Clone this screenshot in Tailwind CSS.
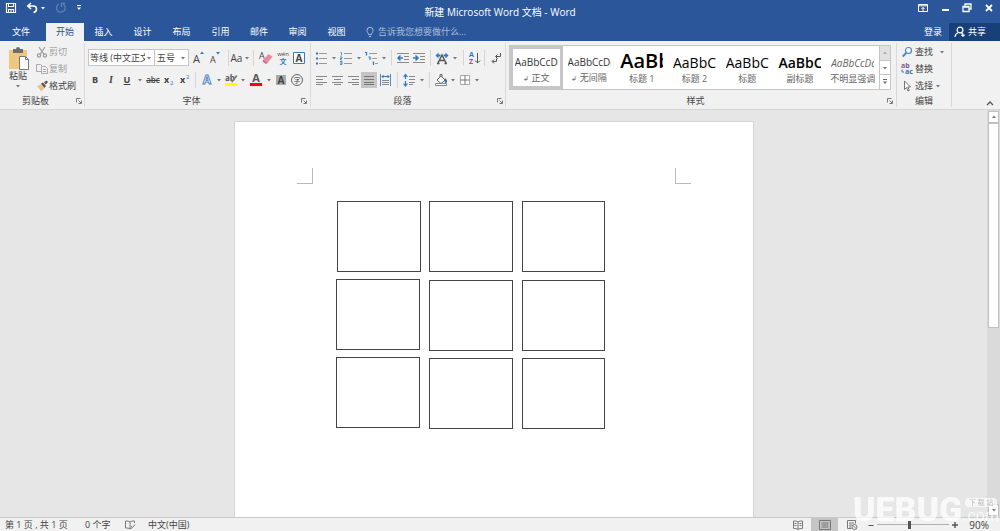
<!DOCTYPE html>
<html lang="zh-CN">
<head>
  <meta charset="UTF-8" />
  <meta name="viewport" content="width=device-width, initial-scale=1.0"/>
  <title>新建 Microsoft Word 文档 - Word</title>
  <script src="https://cdn.jsdelivr.net/npm/@tailwindcss/browser@4"></script>
</head>
<body class="h-screen flex flex-col overflow-hidden bg-[#e6e6e6] text-[#444] text-[9px] leading-3 font-['Open_Sans','Noto_Sans_CJK_SC',sans-serif]">

  <!-- Shared icons -->
  <svg class="hidden">
    <symbol id="caret" viewBox="0 0 8 8"><path d="M2 3h4L4 5.500z" fill="#777"/></symbol>
    <symbol id="caret-light" viewBox="0 0 8 8"><path d="M2 3h4L4 5.500z" fill="#fff"/></symbol>
    <symbol id="launcher" viewBox="0 0 8 8"><path d="M1.500 5.500v-4h4M3.500 3.500 6 6M6.500 3.500v3h-3" fill="none" stroke="#777"/></symbol>
  </svg>

  <!-- Title bar -->
  <header class="bg-[#2b579a] text-white shrink-0">
    <div class="grid grid-cols-[1fr_auto_1fr] h-[23px]">
      <div class="flex items-center h-4 pl-[5px]">
        <button aria-label="保存" class="w-3 h-3"><svg viewBox="0 0 12 12"><path d="M1.500 1.500h9v9h-9z" fill="none" stroke="#fff" stroke-width="1.200"/><path d="M3 1h6v4H3zM3 7h6v4H3z" fill="#fff"/><path d="M4 2h4v2H4zM4 8h1.500v2H4zM6.500 8H8v2H6.500z" fill="#2b579a"/></svg></button>
        <button aria-label="撤消" class="w-3 h-3 ml-[9px]"><svg viewBox="0 0 12 12" fill="none" stroke="#fff" stroke-width="1.600"><path d="M5 1 1.800 4 5 7M2 4h5.500c4 0 4 6 0 6.500"/></svg></button>
        <button aria-label="撤消选项" class="w-2 h-2 ml-px"><svg class="w-2 h-2"><use href="#caret-light"/></svg></button>
        <button aria-label="重做" class="w-3 h-3 ml-2"><svg viewBox="0 0 12 12" fill="none" stroke="#5c7fb5" stroke-width="1.300"><path d="M4 2a4.300 4.300 0 1 0 4.500.5M6.500 5V1.500H10"/></svg></button>
        <button aria-label="自定义快速访问工具栏" class="w-2 h-2 ml-2"><svg viewBox="0 0 8 8" fill="#fff"><path d="M2 1h4v1H2zM2 3.500h4L4 6z"/></svg></button>
      </div>
      <h1 class="text-[10px] pt-[6px]">新建 Microsoft Word 文档 - Word</h1>
      <div class="flex items-center justify-end h-4 pr-[5px] gap-[10px]">
        <button aria-label="功能区显示选项" class="w-3 h-3"><svg viewBox="0 0 12 12" fill="none" stroke="#fff"><path d="M1.500 2.500h9v7h-9zM2 3.800h8M6 9V5.500M4.500 7 6 5.500 7.500 7"/></svg></button>
        <button aria-label="最小化" class="w-3 h-3"><svg viewBox="0 0 12 12" fill="#fff"><path d="M3 7h7v2H3z"/></svg></button>
        <button aria-label="还原" class="w-3 h-3"><svg viewBox="0 0 12 12" fill="none" stroke="#fff" stroke-width="1.300"><path d="M4 4V2h6v5H8M2 4.500h6v5H2zM2 5h6"/></svg></button>
        <button aria-label="关闭" class="w-3 h-3"><svg viewBox="0 0 12 12" fill="none" stroke="#fff" stroke-width="1.800"><path d="m3 3 6 6M9 3 3 9"/></svg></button>
      </div>
    </div>

    <nav class="flex h-[18px] items-stretch">
      <button class="w-[42px] mr-[4px]">文件</button>
      <button class="w-[38px] bg-[#f1f1f1] text-[#2b579a]">开始</button>
      <button class="w-[39px]">插入</button>
      <button class="w-[39px]">设计</button>
      <button class="w-[39px]">布局</button>
      <button class="w-[39px]">引用</button>
      <button class="w-[38px]">邮件</button>
      <button class="w-[39px]">审阅</button>
      <button class="w-[39px]">视图</button>
      <label class="flex items-center ml-2 flex-1">
        <svg class="w-3 h-3 mr-[2px]" viewBox="0 0 12 12" fill="none" stroke="#a9bcdb"><path d="M4.500 8.500C4.500 7 3 6.500 3 4.300a3 3 0 0 1 6 0C9 6.500 7.500 7 7.500 8.500zM4.800 10.500h2.400"/></svg>
        <input type="text" aria-label="告诉我您想要做什么" placeholder="告诉我您想要做什么..." class="w-28 outline-none placeholder:text-[#a9bcdb]"/>
      </label>
      <button class="px-[7px]">登录</button>
      <button class="w-[51px] flex items-center pl-[5px] gap-[2px] bg-[#173f78]">
        <svg class="w-3 h-3" viewBox="0 0 12 12" fill="none" stroke="#fff" stroke-width="1.200"><circle cx="6" cy="4" r="2.900"/><path d="M1 11c.3-2.500 1.500-3.700 3-4.200M7.500 7l1 1M9 7.500V11M7.200 9.300h3.600"/></svg>
        共享
      </button>
    </nav>
  </header>

  <!-- Ribbon -->
  <div class="flex shrink-0 h-[69px] bg-[#f1f1f1] border-b border-[#d5d5d5]">

    <!-- Clipboard -->
    <section class="w-[84px] flex flex-col py-[2px]">
      <div class="flex h-[53px]">
        <button class="w-[36px] flex flex-col items-center pt-[3px]">
          <svg class="w-6 h-6" viewBox="0 0 24 24"><path d="M3 4h18v19H3z" fill="#edc87e"/><path d="M7 3h3a2 2 0 0 1 4 0h3v4H7z" fill="#6d6d6d"/><path d="M13.500 10.500h6l3 3v10h-9z" fill="#fff" stroke="#777"/><path d="M19.500 10.500v3h3" fill="none" stroke="#777"/></svg>
          <span>粘贴</span>
          <svg class="w-2 h-2"><use href="#caret"/></svg>
        </button>
        <div class="flex flex-col items-start gap-[5px] pt-[3px]">
          <button class="flex items-center gap-px text-[#a0a0a0]"><svg class="w-3 h-3" viewBox="0 0 12 12" fill="none" stroke="#9a9a9a" stroke-width="1.200"><path d="m3 1 5 7.500M9 1 4 8.500"/><circle cx="3" cy="9.500" r="1.600"/><circle cx="9" cy="9.500" r="1.600"/></svg>剪切</button>
          <button class="flex items-center gap-px text-[#a0a0a0]"><svg class="w-3 h-3" viewBox="0 0 12 12" fill="#f1f1f1" stroke="#b0a8b0"><path d="M.5 1.500h4l2 2v5h-6z"/><path d="M5.500 3.500h4l2 2v5h-6zM7 6.500h3M7 8.500h3"/></svg>复制</button>
          <button class="flex items-center gap-px"><svg class="w-3 h-3" viewBox="0 0 12 12"><path d="M1 6.500 5 4l3.500 4L5 11.500C4 9.500 3 8 1 6.500z" fill="#edc087"/><path d="m5 3.500 2-1 3 3.500-1.500 2zM8 2.500 10.500.5 12 2 9.800 4.500z" fill="#555"/></svg>格式刷</button>
        </div>
      </div>
      <footer class="flex items-center"><span class="flex-1 pl-[22px]">剪贴板</span><button aria-label="剪贴板选项" class="mr-px"><svg class="w-2 h-2"><use href="#launcher"/></svg></button></footer>
    </section>
    <div class="w-px my-[2px] bg-[#dadada]"></div>

    <!-- Font -->
    <section class="w-[225px] flex flex-col py-[2px] pl-[2px]">
      <div class="flex flex-col gap-[6px] h-[53px] pt-[6px]">
        <div class="flex items-center h-[17px] pl-px">
          <div class="relative w-[67px] h-[17px] bg-white border border-[#c6c6c6]">
            <select aria-label="字体" class="appearance-none w-full h-[15px] pl-px pr-[9px] overflow-hidden"><option>等线 (中文正文)</option></select>
            <svg class="absolute right-px top-1 w-2 h-2 pointer-events-none"><use href="#caret"/></svg>
          </div>
          <div class="relative w-[34px] h-[17px] bg-white border border-l-0 border-[#c6c6c6]">
            <select aria-label="字号" class="appearance-none w-full h-[15px] pl-[2px]"><option>五号</option></select>
            <svg class="absolute right-px top-1 w-2 h-2 pointer-events-none"><use href="#caret"/></svg>
          </div>
          <button aria-label="增大字号" class="w-4 h-4 ml-px"><svg viewBox="0 0 16 16"><text x="3" y="13" font-size="11" fill="#444">A</text><path d="m10 4 2-2.500L14 4z" fill="#2f78c0"/></svg></button>
          <button aria-label="减小字号" class="w-4 h-4 ml-px"><svg viewBox="0 0 16 16"><text x="3" y="13" font-size="9" fill="#444">A</text><path d="M9 2h4l-2 2.500z" fill="#2f78c0"/></svg></button>
          <span class="w-px h-4 ml-[5px] bg-[#d5d5d5]"></span>
          <button aria-label="更改大小写" class="flex items-center ml-px text-[10px]"><span class="w-[13px]">Aa</span><svg class="w-2 h-2"><use href="#caret"/></svg></button>
          <span class="w-px h-4 ml-[2px] bg-[#d5d5d5]"></span>
          <button aria-label="清除格式" class="w-4 h-4 ml-[4px]"><svg viewBox="0 0 16 16"><text x="1" y="9" font-size="9" fill="#444">A</text><path d="m5.500 9.500 5-5.500 4 2.500-5 6.500z" fill="#ea8a9c"/><path d="m5.500 9.500 4 3.500-1.500 1-3.500-2.500z" fill="#d5667c"/></svg></button>
          <button aria-label="拼音指南" class="w-4 h-4 ml-px"><svg viewBox="0 0 16 16"><text x="8" y="6" font-size="6" text-anchor="middle" fill="#444">wén</text><text x="8" y="14" font-size="7" font-weight="bold" text-anchor="middle" fill="#2f78c0">文</text></svg></button>
          <button aria-label="字符边框" class="w-4 h-4"><svg viewBox="0 0 16 16"><path d="M2.500 2.500h11v11h-11z" fill="#fff" stroke="#4479ae"/><text x="8" y="12" font-size="10" font-weight="bold" text-anchor="middle" fill="#444">A</text></svg></button>
        </div>
        <div class="flex items-center h-4">
          <button class="w-4 font-bold">B</button>
          <button class="w-4 font-bold italic font-['Liberation_Serif',serif] text-[10px]">I</button>
          <button class="w-4 font-bold underline">U</button>
          <button aria-label="下划线选项" class="mr-px"><svg class="w-2 h-2 ml-px"><use href="#caret"/></svg></button>
          <button class="w-4 text-[8px] font-semibold line-through">abc</button>
          <button aria-label="下标" class="w-4 h-4"><svg viewBox="0 0 16 16"><text x="3" y="11" font-size="9" font-weight="bold" fill="#444">x</text><text x="9" y="13" font-size="6" fill="#2f78c0">2</text></svg></button>
          <button aria-label="上标" class="w-4 h-4"><svg viewBox="0 0 16 16"><text x="3" y="11" font-size="9" font-weight="bold" fill="#444">x</text><text x="9" y="7" font-size="6" fill="#2f78c0">2</text></svg></button>
          <span class="w-px h-4 ml-[2px] bg-[#d5d5d5]"></span>
          <button aria-label="文本效果" class="w-4 h-4 ml-[3px]"><svg viewBox="0 0 16 16"><text x="8" y="12" font-size="12" font-weight="bold" text-anchor="middle" fill="#fff" stroke="#4c83c3" stroke-width=".9">A</text></svg></button>
          <button aria-label="文本效果选项"><svg class="w-2 h-2"><use href="#caret"/></svg></button>
          <button aria-label="突出显示" class="w-4 h-4"><svg viewBox="0 0 16 16"><text x="2" y="9" font-size="8" font-weight="bold" fill="#555">ab</text><path d="m8 10 5-7 1.500 1-5 6.500z" fill="#777"/><path d="M2 11h12v3H2z" fill="#ff0"/></svg></button>
          <button aria-label="突出显示颜色"><svg class="w-2 h-2"><use href="#caret"/></svg></button>
          <button aria-label="字体颜色" class="w-4 h-4 ml-px"><svg viewBox="0 0 16 16"><text x="8" y="10" font-size="11" font-weight="bold" text-anchor="middle" fill="#555">A</text><path d="M2 11h12v3H2z" fill="red"/></svg></button>
          <button aria-label="更多字体颜色" class="ml-px"><svg class="w-2 h-2"><use href="#caret"/></svg></button>
          <button aria-label="字符底纹" class="w-4 h-4"><svg viewBox="0 0 16 16"><path d="M3 3h10v10H3z" fill="#aaa"/><text x="8" y="12" font-size="10" font-weight="bold" text-anchor="middle" fill="#444">A</text></svg></button>
          <button aria-label="带圈字符" class="w-4 h-4"><svg viewBox="0 0 16 16"><circle cx="8" cy="8" r="5.500" fill="none" stroke="#666"/><text x="8" y="11" font-size="7" text-anchor="middle" fill="#444">字</text></svg></button>
        </div>
      </div>
      <footer class="flex items-center"><span class="flex-1 text-center pr-1">字体</span><button aria-label="字体选项" class="mr-[2px]"><svg class="w-2 h-2"><use href="#launcher"/></svg></button></footer>
    </section>
    <div class="w-px my-[2px] bg-[#dadada]"></div>

    <!-- Paragraph -->
    <section class="w-[194px] flex flex-col py-[2px] pl-[2px]">
      <div class="flex flex-col gap-[6px] h-[53px] pt-[6px]">
        <div class="flex items-center h-[17px]">
          <button aria-label="项目符号" class="w-4 h-4"><svg viewBox="0 0 16 16"><path d="M6 3.500h8M6 8.500h8M6 13.500h8" stroke="#999"/><path d="M3 2.500h2v2H3zM3 7.500h2v2H3zM3 12.500h2v2H3z" fill="#2f78c0"/></svg></button>
          <button aria-label="项目符号库" class="ml-px"><svg class="w-2 h-2"><use href="#caret"/></svg></button>
          <button aria-label="编号" class="w-4 h-4"><svg viewBox="0 0 16 16"><path d="M6 3.500h8M6 8.500h8M6 13.500h8" stroke="#999"/><path d="M2.500 2.500h1v3M2 7h2v1.500H2.500V10H4M2 11.500h2v3H2M2 13h2" fill="none" stroke="#2f78c0" stroke-width=".8"/></svg></button>
          <button aria-label="编号库" class="ml-px"><svg class="w-2 h-2"><use href="#caret"/></svg></button>
          <button aria-label="多级列表" class="w-4 h-4"><svg viewBox="0 0 16 16"><path d="M6 3.500h8M9 8.500h5M12 13.500h3" stroke="#999"/><path d="M2 2.500h1.500v3M5.500 7h1.500v3M9.500 12h1v3" fill="none" stroke="#2f78c0" stroke-width="1.200"/></svg></button>
          <button aria-label="多级列表库" class="ml-px"><svg class="w-2 h-2"><use href="#caret"/></svg></button>
          <span class="w-px h-4 ml-[3px] bg-[#d5d5d5]"></span>
          <button aria-label="减少缩进量" class="w-4 h-4 ml-[3px]"><svg viewBox="0 0 16 16"><path d="M2 3.500h12M9 6.500h5M9 9.500h5M2 12.500h12" stroke="#888"/><path d="M8 8H3m2.500-2.500L3 8l2.500 2.500" fill="none" stroke="#2f78c0" stroke-width="1.500"/></svg></button>
          <button aria-label="增加缩进量" class="w-4 h-4"><svg viewBox="0 0 16 16"><path d="M2 3.500h12M9 6.500h5M9 9.500h5M2 12.500h12" stroke="#888"/><path d="M2 8h5M4.500 5.500 7 8l-2.500 2.500" fill="none" stroke="#2f78c0" stroke-width="1.500"/></svg></button>
          <span class="w-px h-4 ml-[3px] bg-[#d5d5d5]"></span>
          <button aria-label="中文版式" class="w-4 h-4 ml-[3px]"><svg viewBox="0 0 16 16"><path d="m4 13 4-8 4 8M3 13.500h2.500M10.500 13.500H13M5.500 10.500h5" fill="none" stroke="#555" stroke-width="1.400"/><path d="m1.500 5.500 3-3v2h2v2h-2v2zM14.500 5.500l-3-3v2h-2v2h2v2z" fill="#2f78c0"/></svg></button>
          <button aria-label="中文版式选项" class="ml-px"><svg class="w-2 h-2"><use href="#caret"/></svg></button>
          <span class="w-px h-4 ml-[4px] bg-[#d5d5d5]"></span>
          <button aria-label="排序" class="w-4 h-4 ml-[2px]"><svg viewBox="0 0 16 16"><text x="3" y="7" font-size="7" font-weight="bold" fill="#2f78c0">A</text><text x="3" y="14" font-size="7" font-weight="bold" fill="#8a56a8">Z</text><path d="M11.500 3v10M9 10.500l2.500 2.500 2.500-2.500" fill="none" stroke="#555"/></svg></button>
          <span class="w-px h-4 ml-[2px] bg-[#d5d5d5]"></span>
          <button aria-label="显示编辑标记" class="w-4 h-4 ml-[2px]"><svg viewBox="0 0 16 16" fill="none" stroke="#555"><path d="M13.500 3v3.500H9M10.500 4.500l-2 2 2 2M9.500 8.500v3H5.500M7 9.500l-2 2 2 2"/></svg></button>
        </div>
        <div class="flex items-center h-4">
          <button aria-label="左对齐" class="w-4 h-4"><svg viewBox="0 0 16 16"><path d="M3 4.500h11M3 7.500h7M3 10.500h11M3 12.500h7" stroke="#888"/></svg></button>
          <button aria-label="居中" class="w-4 h-4"><svg viewBox="0 0 16 16"><path d="M3 4.500h11M5 7.500h7M3 10.500h11M5 12.500h7" stroke="#888"/></svg></button>
          <button aria-label="右对齐" class="w-4 h-4"><svg viewBox="0 0 16 16"><path d="M3 4.500h11M7 7.500h7M3 10.500h11M7 12.500h7" stroke="#888"/></svg></button>
          <button aria-label="两端对齐" aria-pressed="true" class="w-4 h-4 bg-[#c5c5c5]"><svg viewBox="0 0 16 16"><path d="M3 4.500h10M3 7.500h10M3 10.500h10M3 12.500h10" stroke="#777"/></svg></button>
          <button aria-label="分散对齐" class="w-4 h-4"><svg viewBox="0 0 16 16"><path d="M3.500 2v12M13.500 2v12" stroke="#4c8ac8"/><path d="M5 4.500h7M6.500 3 5 4.500 6.500 6M10.500 3 12 4.500 10.500 6" fill="none" stroke="#2f78c0"/><path d="M5 8.500h7M5 10.500h7M5 12.500h7" stroke="#888"/></svg></button>
          <span class="w-px h-4 ml-[4px] bg-[#d5d5d5]"></span>
          <button aria-label="行和段落间距" class="w-4 h-4 ml-[3px]"><svg viewBox="0 0 16 16"><path d="M8 4.500h6M8 7.500h6M8 10.500h6M8 12.500h4" stroke="#888"/><path d="M4.500 3v4M4.500 9v4.500M2.500 5l2-2.500 2 2.500M2.500 11.500l2 2.500 2-2.500" fill="none" stroke="#2f78c0" stroke-width="1.200"/></svg></button>
          <button aria-label="行距选项" class="ml-px"><svg class="w-2 h-2"><use href="#caret"/></svg></button>
          <span class="w-px h-4 ml-[3px] bg-[#d5d5d5]"></span>
          <button aria-label="底纹" class="w-4 h-4 ml-[3px]"><svg viewBox="0 0 16 16"><path d="m4 8 4-4 4 4-4 3.500zM7 5V2.500h2V5" fill="#fff" stroke="#666"/><path d="M12 6c2.500 1.500 2.500 5 1 5s-2-2.500-1-5z" fill="#2f78c0"/><path d="M2.500 11.500h11v2h-11z" fill="#fff" stroke="#888"/></svg></button>
          <button aria-label="底纹颜色"><svg class="w-2 h-2"><use href="#caret"/></svg></button>
          <button aria-label="边框" class="w-4 h-4"><svg viewBox="0 0 16 16" fill="#fff" stroke="#aaa"><path d="M3.500 3.500h9v9h-9z"/><path d="M8 3.500v9M3.500 8h9" stroke="#777"/></svg></button>
          <button aria-label="边框选项"><svg class="w-2 h-2"><use href="#caret"/></svg></button>
        </div>
      </div>
      <footer class="flex items-center"><span class="flex-1 text-center pr-1">段落</span><button aria-label="段落选项" class="mr-px"><svg class="w-2 h-2"><use href="#launcher"/></svg></button></footer>
    </section>
    <div class="w-px my-[2px] bg-[#dadada]"></div>

    <!-- Styles -->
    <section class="flex-1 min-w-0 flex flex-col py-[2px] pl-[3px]">
      <div class="h-[53px] pt-[2px] pr-[5px]">
        <div class="flex h-[45px] bg-white border border-[#c6c6c6] text-[#666]">
          <div class="flex-1 min-w-0 grid grid-cols-7">
            <button class="min-w-0 flex flex-col items-center justify-end pb-px border-3 border-[#c6c6c6]"><span class="w-[43px] h-4 leading-4 overflow-hidden whitespace-nowrap text-left text-[#333] text-[10px] mb-[2px]">AaBbCcDd</span><span class="whitespace-nowrap"><span class="text-[7px]">↲</span> 正文</span></button>
            <button class="min-w-0 flex flex-col items-center justify-end pb-1"><span class="w-[43px] h-4 leading-4 overflow-hidden whitespace-nowrap text-left text-[#333] text-[10px] mb-[2px]">AaBbCcDd</span><span class="whitespace-nowrap"><span class="text-[7px]">↲</span> 无间隔</span></button>
            <button class="min-w-0 flex flex-col items-center justify-end pb-1"><span class="w-[43px] h-6 leading-6 overflow-hidden whitespace-nowrap text-left text-black text-[20px] font-semibold">AaBb</span><span class="whitespace-nowrap">标题 1</span></button>
            <button class="min-w-0 flex flex-col items-center justify-end pb-1"><span class="w-[43px] h-4 leading-4 overflow-hidden whitespace-nowrap text-left text-black text-[14px] mb-[2px]">AaBbC</span><span class="whitespace-nowrap">标题 2</span></button>
            <button class="min-w-0 flex flex-col items-center justify-end pb-1"><span class="w-[43px] h-4 leading-4 overflow-hidden whitespace-nowrap text-left text-black text-[14px] mb-[2px]">AaBbC</span><span class="whitespace-nowrap">标题</span></button>
            <button class="min-w-0 flex flex-col items-center justify-end pb-1"><span class="w-[43px] h-4 leading-4 overflow-hidden whitespace-nowrap text-left text-black text-[14px] font-semibold mb-[2px]">AaBbC</span><span class="whitespace-nowrap">副标题</span></button>
            <button class="min-w-0 flex flex-col items-center justify-end pb-1"><span class="w-[43px] h-4 leading-4 overflow-hidden whitespace-nowrap text-left italic text-[10px] mb-[2px]">AaBbCcDd</span><span class="whitespace-nowrap">不明显强调</span></button>
          </div>
          <div class="w-[11px] flex flex-col border-l border-[#c6c6c6] divide-y divide-[#c6c6c6]">
            <button aria-label="上一行" class="flex-1 flex items-center justify-center bg-[#e1e1e1]"><svg class="w-2 h-2 rotate-180 opacity-50"><use href="#caret"/></svg></button>
            <button aria-label="下一行" class="flex-1 flex items-center justify-center"><svg class="w-2 h-2"><use href="#caret"/></svg></button>
            <button aria-label="其他样式" class="flex-1 flex items-center justify-center"><svg class="w-2 h-2" viewBox="0 0 8 8" fill="#666"><path d="M2 1h4v1H2zM2 3.500h4L4 6z"/></svg></button>
          </div>
        </div>
      </div>
      <footer class="flex items-center"><span class="flex-1 text-center pr-1">样式</span><button aria-label="样式选项" class="mr-[2px]"><svg class="w-2 h-2"><use href="#launcher"/></svg></button></footer>
    </section>
    <div class="w-px my-[2px] bg-[#dadada]"></div>

    <!-- Editing -->
    <section class="w-[54px] flex flex-col py-[2px] pl-1">
      <div class="flex flex-col items-start gap-[5px] h-[53px] pt-[3px]">
        <button class="flex items-center"><svg class="w-3 h-3 mr-[2px]" viewBox="0 0 12 12" fill="none"><circle cx="7.500" cy="4.500" r="3" fill="#fff" stroke="#4c83c3" stroke-width="1.200"/><path d="m5.200 7-3.500 3.500" stroke="#4c83c3" stroke-width="1.800"/></svg>查找<svg class="w-2 h-2 ml-[5px]"><use href="#caret"/></svg></button>
        <button class="flex items-center"><svg class="w-3 h-3 mr-[2px]" viewBox="0 0 12 12"><text x="0" y="5" font-size="7" font-weight="bold" fill="#7d5a9a">ab</text><text x="4" y="11" font-size="7" font-weight="bold" fill="#3a6ea8">ac</text><path d="M1 6.500v2.500h2" fill="none" stroke="#2f78c0"/></svg>替换</button>
        <button class="flex items-center"><svg class="w-3 h-3 mr-[2px]" viewBox="0 0 12 12"><path d="M3.500 1v8.500l2-2L7 11l1.300-.6L6.800 7H9.500z" fill="#fff" stroke="#666" stroke-width=".9"/></svg>选择<svg class="w-2 h-2 ml-px"><use href="#caret"/></svg></button>
      </div>
      <footer class="text-center pr-1">编辑</footer>
    </section>
    <div class="w-px my-[2px] bg-[#dadada]"></div>
    <div class="w-[48px] flex items-end justify-end pr-[6px] pb-px">
      <button aria-label="折叠功能区" class="w-2 h-2"><svg viewBox="0 0 8 8" fill="none" stroke="#555" stroke-width="1.400"><path d="m1 5 3-3 3 3"/></svg></button>
    </div>
  </div>

  <!-- Document area -->
  <main class="flex flex-1 min-h-0">
    <div class="flex-1 flex justify-center pt-[11px]">
      <div class="relative w-[520px] bg-white border border-b-0 border-[#d4d4d4]">
        <!-- Margin marks -->
        <div class="flex justify-between px-[62px] pt-[46px]">
          <span class="w-4 h-4 border-r border-b border-[#bbb]"></span>
          <span class="w-4 h-4 border-l border-b border-[#bbb]"></span>
        </div>
        <!-- Drawn shapes -->
        <div class="absolute left-[102px] top-[79px] w-[84px] h-[71px] border border-[#444]"></div>
        <div class="absolute left-[194px] top-[79px] w-[84px] h-[71px] border border-[#444]"></div>
        <div class="absolute left-[287px] top-[79px] w-[83px] h-[71px] border border-[#444]"></div>
        <div class="absolute left-[101px] top-[157px] w-[84px] h-[71px] border border-[#444]"></div>
        <div class="absolute left-[194px] top-[158px] w-[84px] h-[71px] border border-[#444]"></div>
        <div class="absolute left-[287px] top-[158px] w-[83px] h-[71px] border border-[#444]"></div>
        <div class="absolute left-[101px] top-[235px] w-[84px] h-[71px] border border-[#444]"></div>
        <div class="absolute left-[194px] top-[236px] w-[84px] h-[71px] border border-[#444]"></div>
        <div class="absolute left-[287px] top-[236px] w-[83px] h-[71px] border border-[#444]"></div>
      </div>
    </div>
    <!-- Scrollbar -->
    <div class="w-[13px] flex flex-col bg-[#dadada] px-px py-px">
      <button aria-label="向上滚动" class="h-3 flex items-center justify-center bg-white border border-[#c0c0c0]"><svg class="w-2 h-2 rotate-180"><use href="#caret"/></svg></button>
      <div class="h-[205px] bg-white border border-[#c0c0c0]"></div>
      <button aria-label="向下滚动" class="h-3 mt-auto flex items-center justify-center bg-white border border-[#c0c0c0]"><svg class="w-2 h-2"><use href="#caret"/></svg></button>
    </div>
  </main>

  <!-- Status bar -->
  <footer class="flex items-center shrink-0 h-[14px] pl-[5px] bg-[#f1f1f1] border-t border-[#c8c8c8]">
    <span class="w-[80px]">第 1 页 , 共 1 页</span>
    <span class="w-[39px]">0 个字</span>
    <button aria-label="校对" class="w-3 h-3 mr-3"><svg viewBox="0 0 12 12" fill="none" stroke="#777"><path d="M6 3C5 2 3 2 1.500 2v7C3 9 5 9 6 10c.5-.6 1-.8 2-1M6 3v7M6 3c1-1 2.500-1 4.500-1v2M7 7l1.500 1.500L11 5.500"/></svg></button>
    <button class="whitespace-nowrap">中文(中国)</button>
    <div class="flex items-center ml-auto pr-[11px]">
      <button aria-label="阅读视图" class="w-[27px] h-[13px] flex items-center justify-center"><svg class="w-3 h-3" viewBox="0 0 12 12" fill="none" stroke="#777"><path d="M6 3C5 2 3 2 1.500 2v7.500c1.500 0 3.500 0 4.500 1 1-1 3-1 4.500-1V2C9 2 7 2 6 3zM6 3v7.500M2.500 4.500h2M2.500 6.500h2M7.500 4.500h2M7.500 6.500h2"/></svg></button>
      <button aria-label="页面视图" aria-pressed="true" class="w-[27px] h-[13px] flex items-center justify-center bg-[#c5c5c5]"><svg class="w-3 h-3" viewBox="0 0 12 12" fill="none" stroke="#777"><path d="M.5 1.500h11v9H.5zM2.500 4h7M2.500 6h7M2.500 8h7"/></svg></button>
      <button aria-label="Web 版式视图" class="w-[27px] h-[13px] flex items-center justify-center"><svg class="w-3 h-3" viewBox="0 0 12 12" fill="none" stroke="#777"><path d="M5.500 9.500h-4v-8h8v3M3 4h5M3 6h3M3 8h2"/><circle cx="8.500" cy="8" r="2.500"/><path d="m7 6.500 3 3"/></svg></button>
      <button aria-label="缩小" class="w-3 h-3 flex items-center justify-center"><svg class="w-2 h-2" viewBox="0 0 8 8" stroke="#555"><path d="M1.500 4.500h5"/></svg></button>
      <input type="range" aria-label="缩放" min="10" max="190" value="90" class="appearance-none w-[72px] h-px bg-[#b0b0b0] [&::-webkit-slider-thumb]:appearance-none [&::-webkit-slider-thumb]:w-[3px] [&::-webkit-slider-thumb]:h-2 [&::-webkit-slider-thumb]:bg-[#555]"/>
      <button aria-label="放大" class="w-3 h-3 flex items-center justify-center"><svg class="w-2 h-2" viewBox="0 0 8 8" stroke="#555" stroke-width="1.400"><path d="M1 4h6M4 1v6"/></svg></button>
      <button class="ml-2 text-[10px]">90%</button>
    </div>
  </footer>

  <!-- Watermark -->
  <div class="fixed right-px bottom-[6px] flex items-end gap-px pointer-events-none text-white/75 font-['Roboto',sans-serif]">
    <span class="text-[34px] leading-[32px] font-black">UEBUG</span>
    <span class="flex flex-col items-center">
      <span class="px-1 rounded-sm bg-white/70 text-[#bbb] text-[7px] leading-[9px] font-['Noto_Sans_CJK_SC',sans-serif]">下 载 站</span>
      <span class="text-[16px] leading-[18px]">.com</span>
    </span>
  </div>
</body>
</html>
